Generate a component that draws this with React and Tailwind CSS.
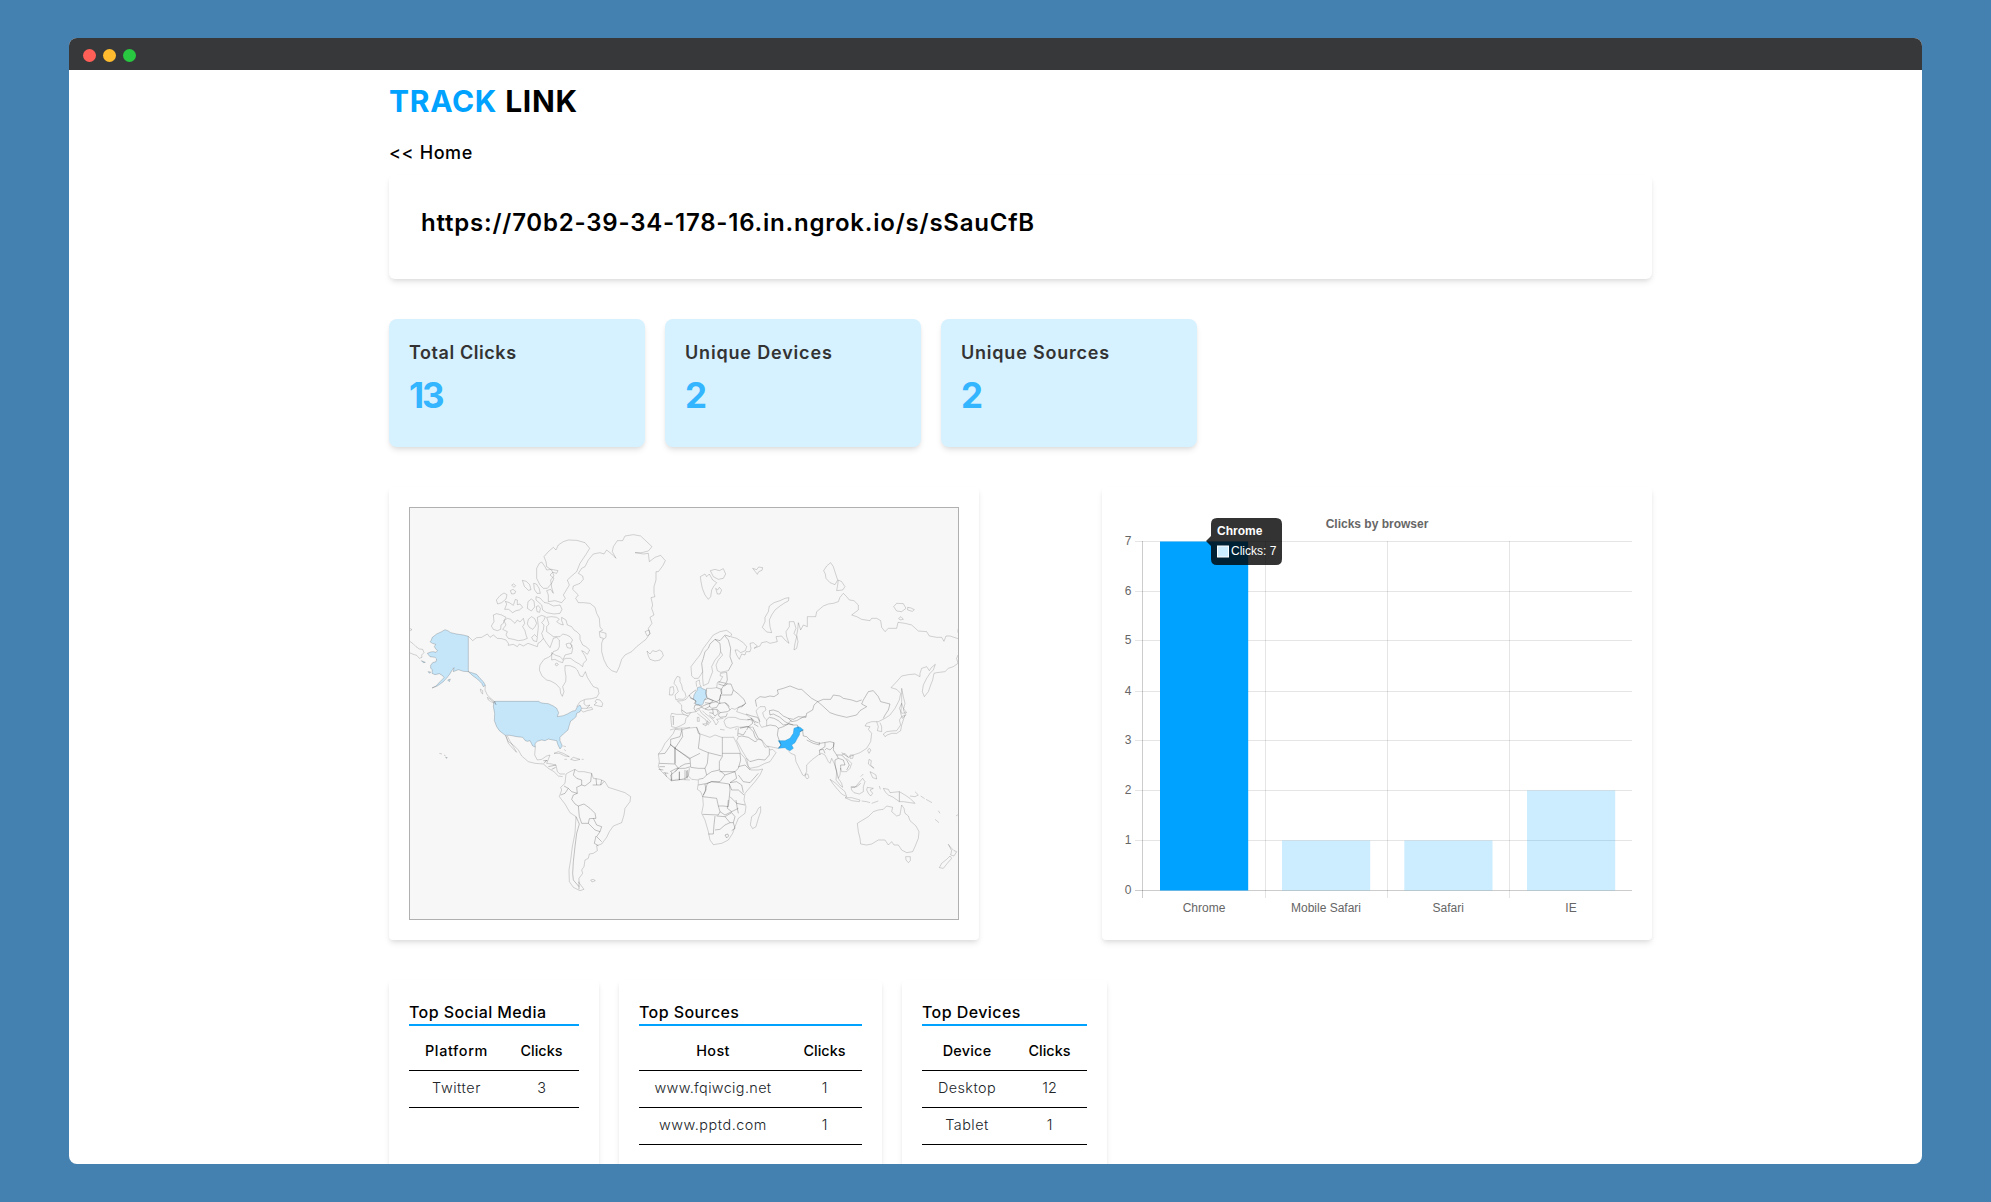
import React from "react";

const cardShadow = "shadow-[0_4px_6px_-1px_rgba(0,0,0,0.1),0_2px_4px_-1px_rgba(0,0,0,0.06)]";

const stats = [
  { label: "Total Clicks", value: "13", spacing: "tracking-[0.57px]" },
  { label: "Unique Devices", value: "2", spacing: "tracking-[0.83px]" },
  { label: "Unique Sources", value: "2", spacing: "tracking-[0.79px]" },
];

const tables = [
  {
    title: "Top Social Media",
    width: "w-[210px]",
    first: "w-[95px]",
    head: ["Platform", "tracking-[0.65px]"],
    rows: [["Twitter", "3", "tracking-[0.55px]"]],
  },
  {
    title: "Top Sources",
    width: "w-[263px]",
    first: "w-[148px]",
    head: ["Host", "tracking-[0.4px]"],
    rows: [
      ["www.fqiwcig.net", "1", "tracking-[0.37px]"],
      ["www.pptd.com", "1", "tracking-[0.53px]"],
    ],
  },
  {
    title: "Top Devices",
    width: "w-[205px]",
    first: "w-[90px]",
    head: ["Device", "tracking-[0.25px]"],
    rows: [
      ["Desktop", "12", "tracking-[0.42px]"],
      ["Tablet", "1", "tracking-[0.5px]"],
    ],
  },
];

/* World map: each region has its own origin; units are thirds of a pixel. */
const northAmericaCoast =
  "M28,384 l8,5 -8,5 M28,423 L38,430 48,440 58,447 68,448 72,458 65,465 66,472 58,475 50,466 40,463 28,458 " +
  "M205,409 L218,422 230,413 245,412 262,402 270,412 280,405 292,415 305,416 318,420 325,430 325,436 340,433 352,440 358,432 370,438 384,430 398,435 412,440 414,430 422,425 430,415 440,430 450,443 455,430 460,415 470,412 478,420 478,440 473,450 460,455 455,465 445,472 432,478 420,495 418,510 426,528 440,540 452,543 468,552 480,565 482,580 487,589 492,575 488,560 497,545 498,530 495,512 495,497 510,497 525,503 532,510 540,528 548,530 556,515 562,532 572,548 580,560 594,565 597,580 590,592 575,596 555,598 540,605 530,620 " +
  "M585,605 L590,598 600,600 608,610 606,620 595,618 582,615 590,608Z M545,625 L560,625 575,622 578,628 562,632 550,636 542,630 M553,600 L552,612 560,618 570,615 560,625 " +
  "M256,556 L255,570 262,585 275,598 288,608 M262,592 L272,598 285,612 278,608 265,600Z M241,567 L248,572 248,582 243,577Z " +
  "M280,345 L290,341 305,345 318,352 312,362 310,370 303,375 302,388 292,392 280,388 274,378 282,365Z " +
  "M312,362 L322,355 332,358 345,370 352,360 360,366 370,355 374,370 368,380 375,392 378,405 382,415 370,420 355,422 340,418 325,415 318,405 322,395 308,388 318,375Z " +
  "M385,358 L395,350 404,356 410,370 405,380 398,388 388,382 382,372Z M395,412 L404,404 412,412 410,425 400,422Z M430,415 L425,400 430,390 432,375 425,368 432,360 436,350 425,346 412,352 415,380 412,410 " +
  "M289,300 L300,287 312,279 321,284 318,297 305,308 293,312Z M314,328 L320,312 316,304 328,308 340,316 346,298 352,300 352,314 360,312 368,322 358,330 348,332 338,338 326,328Z " +
  "M331,272 l8,-4 8,6 -3,7 -9,1z M335,255 l6,-3 6,5 -5,5z M367,241 l12,3 10,10 4,15 -8,2 -12,-12z M401,250 l8,2 8,12 4,16 -10,0 -8,-12z M384,305 l10,-8 8,6 2,18 -10,12 -12,-8z M409,320 l6,-3 6,8 -2,12 -8,-2z " +
  "M408,290 L420,294 432,307 445,310 460,318 480,315 486,328 480,340 462,342 440,338 428,330 425,315 408,300Z " +
  "M440,352 L455,350 470,352 478,358 470,365 480,372 490,375 485,362 485,352 498,360 502,375 515,380 522,390 530,395 540,405 540,418 548,435 558,440 569,450 562,463 552,455 545,452 555,468 560,480 550,490 548,500 538,492 525,485 512,475 500,475 490,478 495,465 515,460 518,445 512,430 518,420 510,410 500,405 488,402 480,410 460,410 450,402 440,395 440,380 447,372Z " +
  "M455,458 L465,465 480,470 490,480 488,488 478,485 465,478 455,480Z M465,492 l6,-3 4,5 -6,4z M498,432 l10,-3 8,8 -4,8 -10,-2z " +
  "M410,235 L410,205 418,190 425,186 435,200 440,210 455,208 474,212 470,220 458,217 450,225 462,235 455,250 442,265 430,265 420,255Z " +
  "M438,185 L432,170 445,155 460,142 468,150 475,135 490,125 505,120 530,121 555,128 569,145 560,160 550,175 540,190 530,215 515,228 502,240 508,255 498,272 490,285 496,295 485,308 465,302 445,305 445,285 440,272 452,268 460,280 455,262 452,240 462,228 455,210 440,200Z " +
  "M648,175 L637,155 640,140 652,122 668,122 675,108 700,104 722,108 740,125 756,140 745,153 725,158 705,158 730,162 745,160 748,185 765,172 782,166 796,182 788,198 775,215 768,215 768,240 762,260 762,280 765,290 753,293 758,315 755,325 762,345 750,352 756,370 745,385 750,400 738,418 725,428 710,440 695,455 675,465 665,478 658,500 650,517 635,512 622,500 612,480 605,455 605,430 610,415 600,412 598,395 608,390 600,382 598,355 590,340 585,322 570,310 550,308 535,308 527,295 535,285 518,268 520,258 540,250 550,238 548,228 535,220 545,205 555,200 565,180 580,162 600,158 612,162 620,150 635,162Z " +
  "M600,395 L618,400 618,412 610,418 M735,395 l12,-5 3,12 -8,6z M741,453 L750,462 758,452 768,455 778,450 786,455 790,467 780,480 765,483 750,478 745,468Z";

const alaska =
  "M205,409 L190,405 170,402 152,398 145,393 135,389 125,395 110,402 97,412 93,422 90,425 97,430 107,433 103,440 107,446 112,452 108,457 100,455 92,456 82,460 90,470 105,472 110,477 108,485 98,488 92,496 92,505 97,509 96,520 105,524 118,521 128,527 132,533 120,545 108,558 96,564 112,558 130,545 142,532 150,521 158,508 162,503 160,515 165,513 175,509 190,514 205,515Z " +
  "M205,515 L218,519 230,523 240,535 250,545 256,556 250,560 245,550 232,537 218,527Z M64,482 L76,487 70,488Z M84,515 l8,1 -3,4z M143,540 l8,-3 -3,8z";

const mainlandUsa =
  "M284,4 L416,4 422,8 432,10 445,11 460,18 470,25 476,38 472,50 490,47 502,42 518,33 526,32 532,20 540,15 545,25 540,35 530,40 528,50 520,58 512,63 508,75 504,90 490,102 480,112 480,122 487,138 480,147 474,135 470,122 458,120 445,117 435,122 425,120 412,124 405,131 406,141 398,138 390,122 382,124 376,122 368,112 350,110 330,106 316,106 308,100 298,92 290,80 283,62 284,40 280,20 282,4 288,14Z " +
  "M118,160 l8,2 M132,165 l5,3 M137,172 l5,1 -3,2z";

const americasCoast =
  "M498,222 L510,215 525,208 535,215 552,215 575,220 580,235 600,238 615,245 625,262 650,270 675,278 692,290 690,305 675,325 672,345 665,368 640,378 628,395 620,412 605,432 590,437 592,452 580,460 568,462 565,475 555,480 552,500 545,510 548,520 537,535 537,548 552,568 540,572 520,562 508,545 507,510 512,480 517,440 525,400 528,350 510,338 495,312 478,290 485,270 482,262 495,250Z " +
  "M572,540 l8,-2 6,4 -10,4z M406,141 L404,165 412,180 425,178 440,168 450,165 445,178 440,190 455,192 468,195 472,215 480,222 495,222 " +
  "M316,106 L325,125 340,135 355,150 365,168 385,185 405,190 430,192 445,205 462,215 475,228 488,230 M318,108 L325,130 338,145 350,157 340,140 328,120 322,108 " +
  "M462,160 L475,155 490,160 508,170 495,168 478,160Z M512,178 L520,172 540,178 525,182Z M493,178h8 M545,178h6 M490,138 l8,2 M492,148 l6,5 " +
  "M870,82 L845,90 825,88 820,100 808,115 795,130 785,150 775,162 778,185 775,200 785,215 800,230 815,243 830,238 870,240";

const americasBorders =
  "M525,208 L520,225 530,235 545,240 545,255 530,262 532,280 515,275 505,265 492,258 M532,280 L520,285 515,298 525,312 535,318 552,312 M535,318 L538,350 545,370 565,370 568,356 588,355 585,340 570,325 552,312 M565,370 L585,390 600,395 605,380 590,375 580,355 M600,395 L590,410 605,425 M588,408 L583,430 595,437 " +
  "M528,350 L538,372 530,400 525,440 520,485 518,520 520,540 537,560 M537,545 V568 M575,220 L572,245 555,258 545,255 M588,235 L590,255 578,255 M605,240 L602,255 590,255 M612,245 L602,255 M482,285 L495,280 505,265 M432,190 L440,180 M445,200 L468,195 M430,182 h12 M455,208 l12,-6 " +
  "M778,190 L825,192 V140 M812,135 L870,178 M812,135 L795,160 775,162 M812,135 V118 L840,110 845,92 M825,192 L835,205 825,215 M778,200 L795,200 M776,208 l14,2 M795,218 L800,230 M790,218 l15,2 M815,243 L812,225 825,215 M838,240 V215 M855,210 V240 M862,235 V210 M825,215 L840,200 855,192 870,190";

const eurasiaCoast =
  "M15,540 L22,529 30,532 30,545 35,555 38,570 45,578 48,590 40,598 25,597 18,600 15,585 25,575 20,560 12,550Z M0,562 L10,560 12,575 8,585 -2,585Z " +
  "M91,230 L105,222 110,230 118,222 128,240 140,248 132,258 125,270 122,290 115,298 105,285 97,265 93,245Z M121,212 L135,208 148,212 160,206 167,222 160,235 145,238 130,230Z M137,265 l6,5 5,-8 7,8 -5,12 -8,0z M248,205 l12,4 6,-8 12,2 -2,8 -10,4 -4,8 -6,-8z " +
  "M482,188 L490,200 498,225 503,240 495,254 480,248 468,235 466,222 461,212 470,198Z M505,240 L515,245 525,260 518,270 500,272 503,255Z " +
  "M357,293 L355,303 345,308 330,318 315,330 305,345 298,360 300,380 305,398 290,396 277,382 285,365 285,352 295,335 298,318 312,308 330,302 345,295Z " +
  "M671,320 L680,310 700,311 708,325 695,335 680,333Z M713,322 l10,2 10,5 -6,5 -14,-4z M686,355 l7,-5 7,8 -10,2z " +
  "M185,402 L182,410 200,415 220,428 230,440 226,452 212,458 202,450 195,450 200,465 208,478 215,462 225,465 228,455 240,455 243,445 240,430 250,428 262,438 252,445 270,438 275,428 290,425 300,430 322,425 318,410 335,408 345,420 357,430 350,410 348,395 358,380 358,365 372,365 378,385 372,400 380,410 375,430 372,450 380,445 384,425 380,405 383,390 385,368 392,390 400,375 412,380 412,350 425,350 437,350 440,335 460,318 475,312 490,310 505,305 510,292 520,280 530,290 538,300 552,302 565,315 565,330 545,345 560,350 575,358 600,362 605,355 620,355 632,362 635,382 645,395 655,385 680,385 684,367 705,370 725,375 745,393 770,395 778,408 800,412 815,412 822,424 828,408 840,408 864,416 " +
  "M864,465 L860,475 864,490 850,500 835,505 825,515 800,518 792,520 788,540 782,555 775,575 763,590 757,575 760,555 770,535 780,520 790,510 796,493 785,502 778,512 770,500 755,505 750,520 750,530 735,522 715,524 695,528 680,545 663,563 680,568 692,580 688,600 675,625 660,645 645,655 M864,388 v10 " +
  "M695,565 L700,590 705,610 700,630 708,645 697,655 692,640 695,610Z " +
  "M65,527 L63,500 78,480 90,465 100,445 115,425 130,405 150,395 170,391 185,402 M65,527 L72,535 85,535 92,525 98,515 98,535 100,557 115,550 120,535 128,515 125,500 135,480 148,465 152,455 158,465 145,480 138,495 142,512 152,517 175,512 " +
  "M80,560 L78,545 88,540 90,555 95,560 M110,565 L125,565 140,563 142,548 150,545 158,530 150,527 152,520 170,517 M58,585 L48,598 38,602 22,603 35,615 35,635";

const eurasiaBorders =
  "M98,515 L95,490 100,475 105,455 115,445 120,432 135,418 150,430 152,455 M135,418 L150,422 165,405 180,410 M165,408 L175,420 182,445 180,470 187,490 175,512 M170,517 L172,540 168,550 145,545 M145,552 L165,558 172,550 M140,563 L155,568 155,582 L152,570 165,552 183,552 190,570 185,585 165,585 152,585 L148,600 150,612 M190,570 L205,582 222,598 227,610 215,620 M110,565 L108,580 112,595 125,600 140,605 150,598 152,582 M70,598 L62,595 58,585 70,575 78,570 M62,592 L78,603 72,612 M580,600 L595,575 610,572 625,590 632,605 660,612 655,630 645,645 640,655";

const germany =
  "M82,563 L92,560 95,565 108,570 108,585 110,592 103,600 100,610 95,616 82,614 76,612 78,603 70,598 72,585 78,575 82,570Z";

const middleCoast =
  "M2,168 L5,200 18,203 30,198 45,190 48,175 55,168 M40,163 L20,163 5,160 2,168 M35,155 L40,163 M55,168 L62,158 78,155 88,148 95,160 110,172 122,185 118,190 112,182 115,195 110,190 108,180 92,168 82,160 M82,172 l5,0 1,12 -6,0z M98,192 l12,-1 -2,7z " +
  "M97,152 L105,160 118,170 130,180 138,195 145,185 140,178 160,175 M150,208 l14,2 M195,208 l6,-2 " +
  "M180,150 L185,145 195,148 205,142 200,155 215,160 230,165 245,175 235,180 210,178 195,172 175,172 165,178 162,185 168,200 180,205 200,200 210,202 M205,142 L220,135 " +
  "M270,140 L285,140 288,150 278,158 282,172 290,180 290,198 275,202 268,190 268,178 262,165 258,152 265,145Z";

const middleBorders =
  "M35,150 L50,160 62,158 M10,172 L10,195 M5,170 h8 M40,163 L55,168 M75,135 L72,145 78,155 M75,135 L85,135 95,140 105,135 120,130 118,140 105,147 95,142 78,148 M103,120 L115,115 130,122 120,130 105,128 M120,130 L138,125 147,130 140,142 125,145 118,138 M105,147 L115,150 128,148 130,160 118,158 M128,148 L140,148 145,160 135,168 128,160 M118,165 L130,175 135,170 " +
  "M147,130 L165,128 175,140 180,150 172,155 150,158 142,148 M150,158 L145,165 150,172 168,170 172,160 M165,128 L172,132 178,140 M227,130 L215,140 205,142 M245,175 L248,190 235,200 210,202 M228,162 L245,168 262,172 270,185 M245,175 L255,185 265,188 M232,178 L248,180 255,190 " +
  "M260,140 L256,120 270,110 285,112 300,108 312,110 325,102 322,90 340,85 360,78 385,88 395,88 408,100 425,115 443,125 432,135 428,150 410,160 408,172 385,170 370,178 355,175 340,168 325,155 310,150 298,152 300,165 310,162 330,172 345,185 355,190 365,180 M290,180 L298,172 312,175 325,182 340,195 355,192 M355,175 L365,185 380,182 398,172 408,168 M355,190 L370,195 382,195 385,205 " +
  "M325,205 L340,200 355,192 370,195 M322,225 L328,242 333,255 325,265 M252,192 L265,200 M290,198 L300,195 318,198 325,205 322,225 M248,200 L255,215 265,235 275,240 " +
  "M443,125 L460,118 482,118 490,105 510,108 520,115 545,120 560,125 575,120 M443,125 L455,135 480,158 500,165 530,172 560,165 570,152 590,140 575,132 580,120 M400,210 L390,215";

const pakistan =
  "M372,205 L385,200 392,203 400,210 390,215 388,225 382,235 375,248 365,255 370,265 360,272 350,268 346,263 325,265 333,255 325,242 345,242 360,235 370,220Z";

const southCoast =
  "M645,55 L625,65 605,65 590,70 585,78 600,80 595,88 605,100 602,125 590,145 570,158 550,165 535,172 525,160 515,165 M620,65 L625,80 622,92 635,95 635,80 630,68 M640,102 L650,95 665,93 680,92 685,85 692,75 688,60 695,50 705,45 700,60 695,75 692,92 680,100 665,100 652,105 645,110Z M688,25 L695,40 710,38 700,25 695,10Z " +
  "M597,145 l6,5 -6,10 -4,-8z M540,165 l10,0 -2,10 -8,0z M355,152 L362,160 375,165 378,185 388,205 398,225 403,228 410,215 410,195 425,180 445,165 455,160 465,165 475,185 480,190 485,175 495,195 500,215 498,240 510,255 518,262 515,250 505,235 510,225 512,205 515,215 530,215 540,205 545,190 530,175 M407,222 l6,0 4,10 -6,5 -5,-7z " +
  "M480,238 L495,248 510,262 525,275 530,290 515,282 500,265 488,250Z M525,293 L545,293 570,300 568,305 545,302Z M543,260 L555,262 565,250 578,235 585,245 580,260 580,275 568,282 552,278 545,270Z M590,270 L592,262 610,265 600,270 608,280 602,288 595,280Z M575,303 L590,305 600,308 M605,310 L625,303 " +
  "M597,178 L604,182 602,195 612,205 605,200 595,192Z M600,215 l10,5 8,5 2,12 -12,-4z M580,222 l-8,8 M628,258 l3,10 M640,265 L655,268 660,278 688,275 705,285 720,295 735,310 720,308 700,305 688,305 670,292 655,285 645,275Z M735,275 L745,285 735,290 720,288 M752,288 l12,8 M768,298 l18,10 M805,332 l5,8 M795,358 l12,10 M858,348 l6,-4 " +
  "M562,370 L575,362 595,350 610,335 625,330 640,328 650,318 668,322 665,335 680,348 690,345 695,315 702,325 705,340 715,348 720,362 738,378 747,395 745,415 735,440 728,455 710,458 695,450 685,435 672,435 665,425 655,435 645,420 625,420 605,432 590,435 572,432 570,415 565,395Z M707,470 l14,0 0,12 -6,6 -7,-8z " +
  "M835,433 L842,442 852,452 860,455 852,468 842,465 845,452Z M840,468 L845,475 832,490 820,505 808,503 815,490 830,478Z M272,320 L272,335 265,355 258,380 248,386 241,375 245,350 258,340 265,325Z " +
  "M325,145 L310,142 290,138 275,120 262,118 M205,110 L200,122 215,150 230,175 235,200 240,205 265,200 285,190 300,185 318,158 308,148 300,150 295,140 285,142 275,120 M190,110 L200,130 212,160 225,175 232,195 242,210 265,210 278,207 270,225 255,245 235,268 225,280 222,300 228,320 225,340 205,355 195,380 188,400 175,420 155,430 130,434 120,420 115,395 105,360 95,340 100,315 98,290 92,275 82,268 85,250 85,240 65,238 55,228 45,235 20,242 0,240 M60,84 L80,82 85,100 100,105 120,112 135,105 155,112 190,112 M60,84 L35,84 15,86 0,90";

const southBorders =
  "M398,92 L400,108 410,110 420,120 440,128 450,130 462,128 M410,120 L430,130 448,135 448,127 M465,128 L465,140 450,150 M448,150 L450,165 M448,150 L460,148 465,160 M462,128 L480,125 492,128 490,140 480,150 470,145 465,150 M492,128 L490,150 500,165 505,175 495,180 495,195 500,215 505,235 M500,165 L515,165 530,180 538,195 530,210 M505,175 L520,180 525,195 512,195 512,208 M515,158 L535,172 M545,262 L560,260 572,250 M688,275 V305 " +
  "M240,185 L265,178 285,180 298,165 298,148 M210,85 L230,80 245,82 M230,90 L235,80 250,95 255,110 262,120 M205,110 L215,108 235,112 255,125 262,122 M228,92 L220,105 205,100 M205,85 L203,108 M230,175 L240,185 " +
  "M80,82 L90,105 85,145 M15,145 L60,175 90,160 M85,145 L100,152 115,158 155,168 M35,85 L38,110 15,145 M0,132 L15,145 M157,112 V160 H210 M157,160 V170 L148,185 148,210 M60,175 L62,200 45,205 20,205 0,215 M62,202 L85,205 105,205 112,190 115,158 M55,228 L58,205 M50,235 V212 M28,240 V215 M5,240 V215 M105,205 L110,225 100,235 85,238 M110,225 L125,215 148,210 165,225 150,245 125,245 112,250 85,255 " +
  "M112,250 L125,245 150,248 178,252 180,270 178,290 175,320 160,318 145,318 140,295 115,292 98,290 105,275Z M105,252 L108,270 100,285 M165,225 L195,215 200,235 180,248 M148,215 L195,215 M210,160 L212,180 205,205 195,215 M205,200 L225,195 240,210 M205,225 L220,245 240,248 265,220 M200,245 L215,255 220,278 M180,248 L200,245 M185,270 L205,270 222,285 M185,270 L178,252 M180,290 L200,310 225,315 " +
  "M145,318 L150,335 165,345 185,335 205,325 M98,343 L145,345 150,335 M135,348 L132,375 130,402 115,402 M135,390 L150,388 165,375 180,368 165,350 140,348 M165,350 L185,338 195,350 190,368 180,368 M190,368 L195,385 185,392 M165,405 l8,-3 3,6 -6,6z M198,300 L202,325 205,340 M175,300 L172,325 185,335 M15,145 V190";

function Land({ at, coast, borders, light, strong }) {
  return (
    <g transform={`translate(${at[0]} ${at[1]}) scale(0.33333)`}>
      {light && <path d={light} fill="#c5e5f9" stroke="#000" strokeOpacity="0.2" strokeWidth="2.6" />}
      {strong && <path d={strong} fill="#33b5ff" stroke="#2b8fc8" strokeOpacity="0.6" strokeWidth="2" />}
      {coast && <path d={coast} stroke="#000" strokeOpacity="0.18" strokeWidth="2.7" />}
      {borders && <path d={borders} stroke="#000" strokeOpacity="0.25" strokeWidth="2.7" />}
    </g>
  );
}

function WorldMap() {
  return (
    <div className="h-[413px] w-[550px] border border-[#b0b0b0] bg-[#f7f7f7]">
      <svg viewBox="410 508 548 411" className="block h-[411px] w-[548px]" fill="none" strokeLinejoin="round">
        <Land at={[400, 500]} light={alaska} coast={northAmericaCoast} />
        <Land at={[400, 700]} light={mainlandUsa} coast={americasCoast} borders={americasBorders} />
        <Land at={[670, 500]} coast={eurasiaCoast} borders={eurasiaBorders} light={germany} />
        <Land at={[670, 700]} coast={southCoast} borders={southBorders} />
        <Land at={[670, 660]} coast={middleCoast} borders={middleBorders} strong={pakistan} />
      </svg>
    </div>
  );
}

const bars = [
  { name: "Chrome", x: 58, y: 54.5, h: 349, fill: "#00a2ff" },
  { name: "Mobile Safari", x: 180, y: 353.5, h: 50, fill: "#00a2ff33" },
  { name: "Safari", x: 302.3, y: 353.5, h: 50, fill: "#00a2ff33" },
  { name: "IE", x: 425, y: 303.5, h: 100, fill: "#00a2ff33" },
];
const gridY = [403, 353, 303, 253, 204, 153, 104, 54];

function BrowserChart() {
  return (
    <svg viewBox="0 0 550 453" className="block h-[453px] w-[550px]" fontFamily="Liberation Sans, Arial, sans-serif" fontSize="12" fill="#666">
      <text x="275" y="41" textAnchor="middle" fontWeight="bold">Clicks by browser</text>
      {gridY.map((y, i) => (
        <g key={y}>
          <rect x="33" y={y} width="497" height="1" fill="#000" fillOpacity={i === 0 ? 0.2 : 0.1} />
          <text x="29.5" y={y + 4} textAnchor="end">{i}</text>
        </g>
      ))}
      {[40, 163, 285, 407].map((x, i) => (
        <rect key={x} x={x} y="54" width="1" height="357" fill="#000" fillOpacity={i === 0 ? 0.2 : 0.1} />
      ))}
      {bars.map((b) => (
        <g key={b.name}>
          <rect x={b.x} y={b.y} width="88.2" height={b.h} fill={b.fill} />
          <text x={b.x + 44} y="425" textAnchor="middle">{b.name}</text>
        </g>
      ))}
      <path d="M115 31 H174 Q180 31 180 37 V72 Q180 78 174 78 H115 Q109 78 109 72 V59 L104 54 L109 49 V37 Q109 31 115 31Z" fill="#000" fillOpacity="0.8" />
      <text x="115" y="48" fontWeight="bold" fill="#fff">Chrome</text>
      <rect x="115" y="58.5" width="12" height="12" fill="#fff" />
      <rect x="116" y="59.5" width="10" height="10" fill="#ccecff" />
      <text x="129" y="68.3" fill="#fff">Clicks: 7</text>
    </svg>
  );
}

function DataTable({ table }) {
  return (
    <section className={`h-[220px] rounded bg-white p-5 ${cardShadow} ${table.width}`}>
      <h3 className="h-[26px] border-b-2 border-[#00a2ff] text-[16px] leading-6 font-medium tracking-[0.42px] whitespace-nowrap">
        {table.title}
      </h3>
      <div className="mt-2 text-center text-[14.4px]">
        <div className="flex h-[37px] items-center border-b border-black pb-0.5 font-medium">
          <span className={`${table.first} ${table.head[1]}`}>{table.head[0]}</span>
          <span className="flex-1">Clicks</span>
        </div>
        {table.rows.map(([name, clicks, spacing]) => (
          <div key={name} className="flex h-[37px] items-center border-b border-black pb-0.5 font-light text-[#212529]">
            <span className={`${table.first} ${spacing}`}>{name}</span>
            <span className="flex-1">{clicks}</span>
          </div>
        ))}
      </div>
    </section>
  );
}

export default function App() {
  return (
    <div className="h-[1202px] w-[1991px] overflow-hidden bg-[#4480b0] pt-[38px] pl-[69px] font-['Inter',sans-serif] text-black">
      <div className="h-[1126px] w-[1853px] overflow-hidden rounded-lg bg-white">
        <div className="flex h-8 items-center gap-[7px] bg-[#37383a] pt-0.5 pl-[13.5px]">
          <span className="size-[13px] rounded-full bg-[#ff5f57]" />
          <span className="size-[13px] rounded-full bg-[#febc2e]" />
          <span className="size-[13px] rounded-full bg-[#28c840]" />
        </div>

        <main className="ml-80 w-[1263px] pt-[13px]">
          <h1 className="flex gap-[8px] text-[30px] leading-9 font-bold">
            <span className="tracking-[0.7px] text-[#00a2ff]">TRACK</span>
            <span className="tracking-[0.7px]">LINK</span>
          </h1>
          <a className="mt-5 block text-[18px] leading-7 font-medium tracking-[0.6px]">&lt;&lt; Home</a>

          <section className={`mt-2 h-[104px] rounded-md bg-white px-8 pt-8 ${cardShadow}`}>
            <p className="text-[24px] leading-8 font-semibold tracking-[0.78px]">
              https://70b2-39-34-178-16.in.ngrok.io/s/sSauCfB
            </p>
          </section>

          <div className="mt-10 flex gap-5">
            {stats.map((s) => (
              <section key={s.label} className={`h-32 w-64 rounded-lg bg-[#d6f1ff] p-5 ${cardShadow}`}>
                <h2 className={`text-[18px] leading-7 font-semibold text-[#333] ${s.spacing}`}>{s.label}</h2>
                <p className="mt-2 text-[35px] leading-10 font-bold tracking-[-2px] text-[#33b5ff]">{s.value}</p>
              </section>
            ))}
          </div>

          <div className="mt-10 flex justify-between">
            <section className={`h-[453px] w-[590px] rounded bg-white p-5 ${cardShadow}`}>
              <WorldMap />
            </section>
            <section className={`h-[453px] w-[550px] rounded bg-white ${cardShadow}`}>
              <BrowserChart />
            </section>
          </div>

          <div className="mt-10 flex gap-5">
            {tables.map((t) => (
              <DataTable key={t.title} table={t} />
            ))}
          </div>
        </main>
      </div>
    </div>
  );
}
